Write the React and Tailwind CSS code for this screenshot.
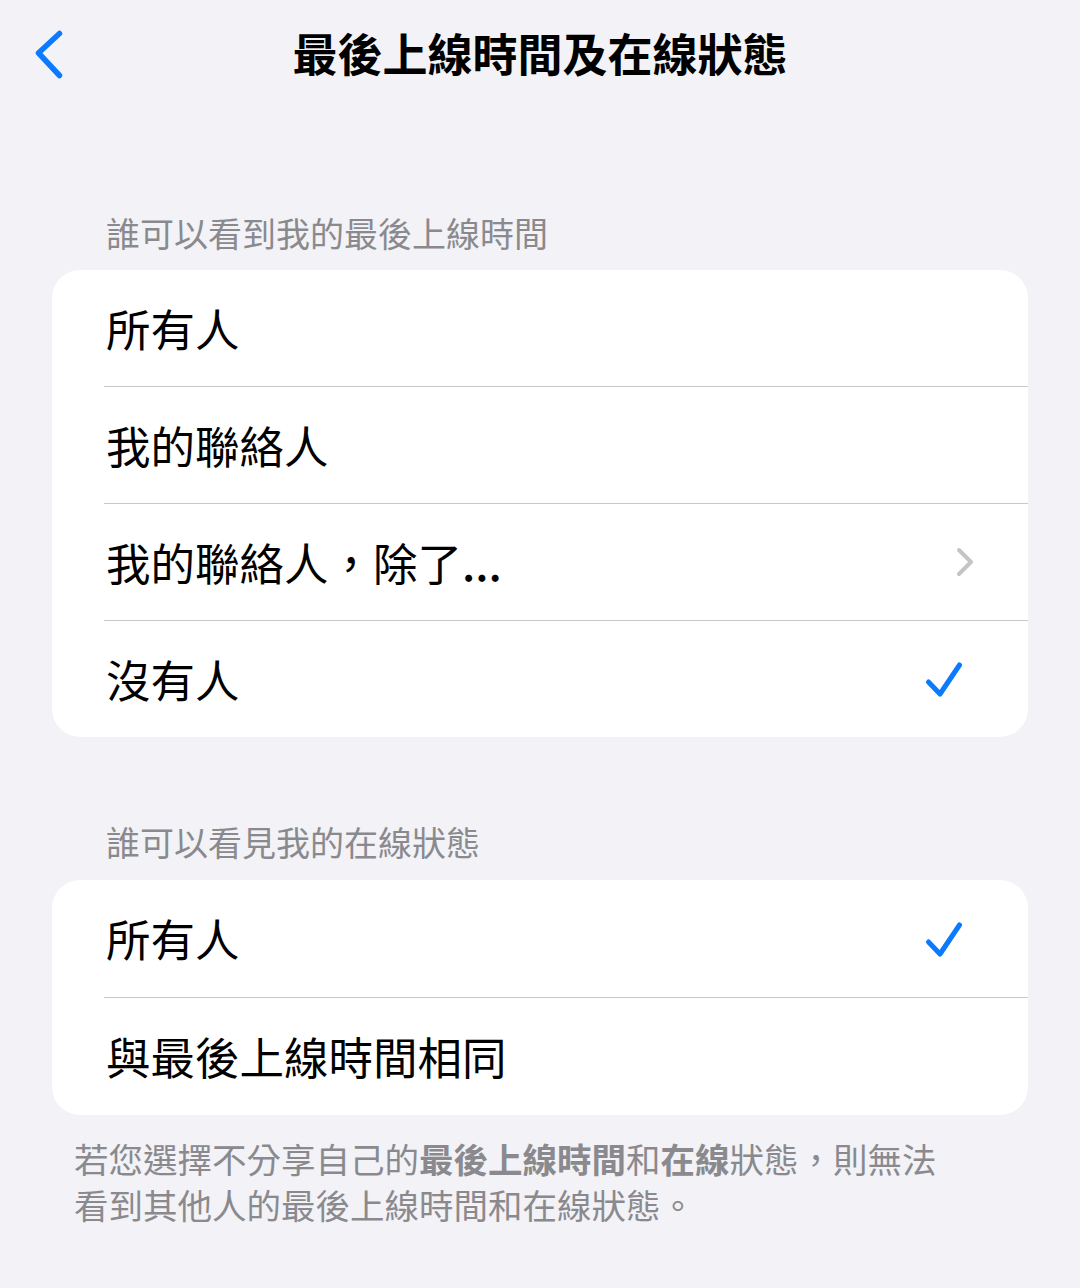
import React from 'react';

const CheckIcon = () => (
  <svg width="40" height="40" viewBox="0 0 40 40" className="mr-[64px]">
    <path d="M4.5 23 L16 35 L35.5 6" fill="none" stroke="#0a7aff" strokeWidth="5" strokeLinecap="round" strokeLinejoin="round" />
  </svg>
);

const ChevronIcon = () => (
  <svg width="20" height="32" viewBox="0 0 20 32" className="mr-[53px]">
    <path d="M4 4 L16 16 L4 28" fill="none" stroke="#c4c4c7" strokeWidth="4" strokeLinecap="round" strokeLinejoin="round" />
  </svg>
);

const Row = ({ label, right, last, h = 'h-[117px]' }) => (
  <div className="pl-[52px]">
    <div className={`${last ? 'h-[116px]' : h + ' border-b border-[#c8c8cc]'} flex items-center justify-between`}>
      <span className="text-[44.5px] text-black pl-[2px]">{label}</span>
      {right}
    </div>
  </div>
);

const App = () => {
  return (
    <div className="w-full min-h-[1288px] bg-[#f2f2f7] font-['Noto_Sans_CJK_TC','Noto_Sans_CJK_SC',sans-serif]">
      {/* nav bar */}
      <div className="h-[104px] grid grid-cols-[1fr_auto_1fr] items-center">
        <div className="pl-[30px]">
          <svg width="40" height="56" viewBox="0 0 40 56">
            <path d="M29.5 9.5 L8.5 29 L29.5 51.5" fill="none" stroke="#0a7aff" strokeWidth="5.5" strokeLinecap="round" strokeLinejoin="round" />
          </svg>
        </div>
        <h1 className="text-[45px] font-bold text-black leading-none">最後上線時間及在線狀態</h1>
        <div />
      </div>

      <div className="px-[52px]">
        <p className="mt-[109px] mb-[17px] pl-[54px] text-[34px] leading-[40px] text-[#8a8a8e]">誰可以看到我的最後上線時間</p>
        <div className="bg-white rounded-[28px] overflow-hidden">
          <Row label="所有人" h="h-[117px]" />
          <Row label="我的聯絡人" />
          <Row label={<>我的聯絡人，除了<span className="font-medium">...</span></>} right={<ChevronIcon />} />
          <Row label="沒有人" right={<CheckIcon />} last />
        </div>

        <p className="mt-[85px] mb-[18px] pl-[54px] text-[34px] leading-[40px] text-[#8a8a8e]">誰可以看見我的在線狀態</p>
        <div className="bg-white rounded-[28px] overflow-hidden">
          <Row label="所有人" right={<CheckIcon />} h="h-[118px]" />
          <div className="pl-[52px]">
            <div className="h-[117px] flex items-center">
              <span className="text-[44.5px] text-black pl-[2px]">與最後上線時間相同</span>
            </div>
          </div>
        </div>

        <p className="mt-[20px] pl-[22px] pr-[60px] text-[34.5px] leading-[46px] text-[#8a8a8e]">
          若您選擇不分享自己的<span className="font-bold">最後上線時間</span>和<span className="font-bold">在線</span>狀態，則無法<br />看到其他人的最後上線時間和在線狀態。
        </p>
      </div>
    </div>
  );
};

export default App;
